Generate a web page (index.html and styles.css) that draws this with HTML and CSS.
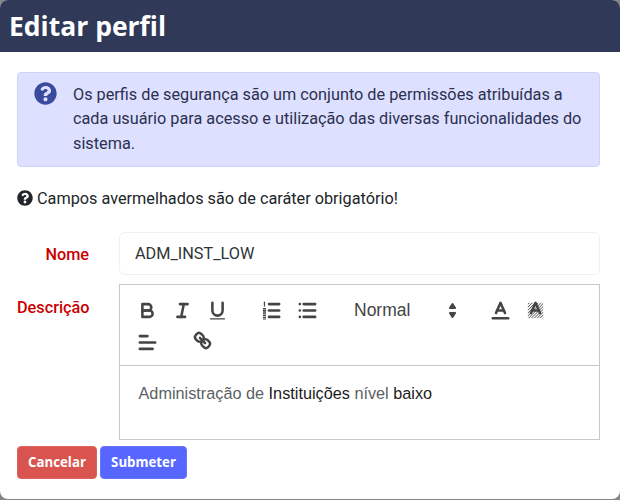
FILE: index.html
```html
<!DOCTYPE html>
<html lang="pt-BR">
<head>
<meta charset="utf-8">
<title>Editar perfil</title>
<link rel="stylesheet" href="styles.css">
</head>
<body>
<svg class="defs" width="0" height="0" aria-hidden="true">
  <defs>
    <symbol id="q" viewBox="0 0 512 512"><path d="M504 256c0 136.997-111.043 248-248 248S8 392.997 8 256C8 119.083 119.043 8 256 8s248 111.083 248 248zM262.655 90c-54.497 0-89.255 22.957-116.549 63.758-3.536 5.286-2.353 12.415 2.715 16.258l34.699 26.31c5.205 3.947 12.621 3.008 16.665-2.122 17.864-22.658 30.113-35.797 57.303-35.797 20.429 0 45.698 13.148 45.698 32.958 0 14.976-12.363 22.667-32.534 33.976C247.128 238.528 216 254.941 216 296v4c0 6.627 5.373 12 12 12h56c6.627 0 12-5.373 12-12v-1.333c0-28.462 83.186-29.647 83.186-106.667 0-58.002-60.165-102-116.531-102zM256 338c-25.365 0-46 20.635-46 46 0 25.364 20.635 46 46 46s46-20.636 46-46c0-25.365-20.635-46-46-46z"/></symbol>
    <pattern id="hatch" width="1.6" height="1.6" patternUnits="userSpaceOnUse" patternTransform="rotate(-45)"><rect width="1.6" height=".6" fill="#555"/></pattern>
  </defs>
</svg>
<main class="modal">
  <header class="modal-header"><h1 class="modal-title">Editar perfil</h1></header>
  <div class="modal-body">
    <div class="alert">
      <svg class="alert-icon"><use href="#q"/></svg>
      <p class="alert-text">Os perfis de segurança são um conjunto de permissões atribuídas a cada usuário para acesso e utilização das diversas funcionalidades do sistema.</p>
    </div>
    <p class="hint"><svg class="hint-icon"><use href="#q"/></svg>Campos avermelhados são de caráter obrigatório!</p>
    <div class="field field-name">
      <label class="label">Nome</label>
      <div class="input">ADM_INST_LOW</div>
    </div>
    <div class="field">
      <label class="label label-top">Descrição</label>
      <div class="editor">
        <div class="toolbar">
          <span class="group">
            <span class="tb"><svg viewBox="0 0 18 18"><path class="s" d="M5,4H9.5A2.5,2.5,0,0,1,12,6.5v0A2.5,2.5,0,0,1,9.5,9H5V4Z"/><path class="s" d="M5,9h5.5A2.5,2.5,0,0,1,13,11.5v0A2.5,2.5,0,0,1,10.5,14H5V9Z"/></svg></span>
            <span class="tb"><svg viewBox="0 0 18 18"><line class="s" x1="7" x2="13" y1="4" y2="4"/><line class="s" x1="5" x2="11" y1="14" y2="14"/><line class="s" x1="8" x2="10" y1="14" y2="4"/></svg></span>
            <span class="tb"><svg viewBox="0 0 18 18"><path class="s" d="M5,3V9a4.012,4.012,0,0,0,4,4H9a4.012,4.012,0,0,0,4-4V3"/><rect class="f" x="3" y="15" width="12" height="1" rx=".5"/></svg></span>
          </span>
          <span class="group">
            <span class="tb tb-ol"><svg viewBox="0 0 18 18"><line class="s" x1="7" x2="15" y1="4" y2="4"/><line class="s" x1="7" x2="15" y1="9" y2="9"/><line class="s" x1="7" x2="15" y1="14" y2="14"/><path class="t" d="M3.5 2.5v3"/><path class="n" d="M3.5 7v9"/></svg></span>
            <span class="tb"><svg viewBox="0 0 18 18"><line class="s" x1="6" x2="15" y1="4" y2="4"/><line class="s" x1="6" x2="15" y1="9" y2="9"/><line class="s" x1="6" x2="15" y1="14" y2="14"/><line class="s" x1="3" x2="3" y1="4" y2="4"/><line class="s" x1="3" x2="3" y1="9" y2="9"/><line class="s" x1="3" x2="3" y1="14" y2="14"/></svg></span>
          </span>
          <span class="group picker">
            <span class="picker-label">Normal</span>
            <svg class="picker-arrows" viewBox="0 0 18 18"><polygon class="a" points="7 7 9 4 11 7"/><polygon class="a" points="7 11 11 11 9 14"/></svg>
          </span>
          <span class="group">
            <span class="tb"><svg viewBox="0 0 18 18"><line class="s" x1="3" x2="15" y1="15" y2="15"/><polyline class="s" points="5.5 11 9 3 12.5 11"/><line class="s" x1="11.63" x2="6.38" y1="9" y2="9"/></svg></span>
            <span class="tb"><svg viewBox="0 0 18 18"><rect x="3" y="3" width="12" height="12" fill="url(#hatch)"/><polyline class="s" points="5.5 11 9 3 12.5 11"/><line class="s" x1="11.63" x2="6.38" y1="9" y2="9"/></svg></span>
          </span>
          <span class="group">
            <span class="tb tb-align"><svg viewBox="0 0 18 18"><line class="s" x1="3" x2="15" y1="9" y2="9"/><line class="s" x1="3" x2="13" y1="14" y2="14"/><line class="s" x1="3" x2="9" y1="4" y2="4"/></svg></span>
          </span>
          <span class="group">
            <span class="tb"><svg viewBox="0 0 18 18"><line class="s" x1="7" x2="11" y1="7" y2="11"/><path class="s" d="M8.9,4.577a3.476,3.476,0,0,1,.36,4.679A3.476,3.476,0,0,1,4.577,8.9C3.185,7.5,2.035,6.4,4.217,4.217S7.5,3.185,8.9,4.577Z"/><path class="s" d="M13.423,9.1a3.476,3.476,0,0,0-4.679-.36,3.476,3.476,0,0,0,.36,4.679c1.392,1.392,2.5,2.542,4.679.36S14.815,10.5,13.423,9.1Z"/></svg></span>
          </span>
        </div>
        <div class="editor-body"><span class="muted">Administração de </span>Instituições <span class="muted">nível </span>baixo</div>
      </div>
    </div>
    <div class="actions">
      <button class="btn btn-cancel" type="button">Cancelar</button>
      <button class="btn btn-submit" type="button">Submeter</button>
    </div>
  </div>
</main>
</body>
</html>
```
FILE: styles.css
```css
html, body { margin: 0; padding: 0; height: 100%; }
body { background: #858585; font-family: Roboto, sans-serif; color: #212529; overflow: hidden; }
.defs { position: absolute; }
.modal { width: 620px; height: 499px; background: #fff; border-radius: 8px; overflow: hidden; box-sizing: border-box; }
.modal-header { height: 52px; background: #303a58; display: flex; align-items: center; padding-left: 9px; }
.modal-title { margin: 0; color: #fff; font: 700 26.5px/1 "Open Sans", sans-serif; }
.modal-body { padding: 20px 20px 0 17px; }
.alert { display: flex; gap: 16px; box-sizing: border-box; height: 95px; padding: 9px 10px 0 16px; background: #dee0ff; border: 1px solid #cfd2f7; border-radius: 4px; color: #2b3050; }
.alert-icon { flex: none; width: 23px; height: 23px; fill: #3a4a9f; }
.alert-text { margin: 0; font-size: 16.25px; line-height: 24.4px; padding-top: 1px; }
.hint { display: flex; align-items: center; margin: 20px 0 0; height: 22px; font-size: 16.25px; }
.hint-icon { width: 16px; height: 16px; margin-right: 4px; fill: #212529; }
.field { display: flex; margin-top: 9px; }
.field-name { margin-top: 23px; }
.label { width: 72px; flex: none; text-align: right; color: #c80000; font-weight: 500; font-size: 16.25px; padding-top: 13px; margin-right: 30px; line-height: 19px; }
.label-top { padding-top: 14px; }
.input { flex: 1; box-sizing: border-box; height: 43px; padding: 0 15px; line-height: 41px; border: 1px solid #eef0f2; border-radius: 6px; font-size: 16.25px; color: #2f3438; }
.editor { flex: 1; box-sizing: border-box; height: 156px; border: 1px solid #c8c8c8; font-family: "Liberation Sans", sans-serif; }
.toolbar { display: flex; flex-wrap: wrap; box-sizing: border-box; height: 81px; padding: 10px 10px; border-bottom: 1px solid #c8c8c8; }
.group { display: flex; margin-right: 20px; height: 30px; }
.tb { width: 35px; height: 30px; display: flex; align-items: center; justify-content: center; }
.tb svg { width: 23px; height: 23px; margin-left: -1px; }
.tb-ol svg { margin-left: -2px; }
.tb-align { padding-top: 5px; box-sizing: border-box; }
.s, .t, .n { fill: none; stroke: #444; stroke-linecap: round; stroke-linejoin: round; stroke-width: 2; }
.t { stroke-width: 1; }
.n { stroke-width: 2.4; stroke-dasharray: 1.2 .5; stroke-linecap: butt; }
.f { fill: #444; }
.a { fill: #444; stroke: #444; stroke-width: 1.6; stroke-linejoin: round; }
.picker { width: 118.5px; align-items: center; justify-content: space-between; }
.picker-label { padding-left: 9px; font-size: 17.5px; color: #444; }
.picker-arrows { width: 23px; height: 23px; }
.editor-body { padding: 17px 18.5px; font-size: 16.25px; line-height: 20px; color: #1c1c1c; }
.muted { color: #5c5f63; }
.actions { display: flex; gap: 3px; margin-top: 6px; }
.btn { height: 33px; border: 1px solid transparent; border-radius: 4px; color: #fff; font: 700 13.25px/1 "Open Sans", sans-serif; padding: 0; }
.btn-cancel { width: 80px; background: #d9534f; border-color: #e0625e; }
.btn-submit { width: 87px; background: #5766ff; border-color: #6675ff; }
```
